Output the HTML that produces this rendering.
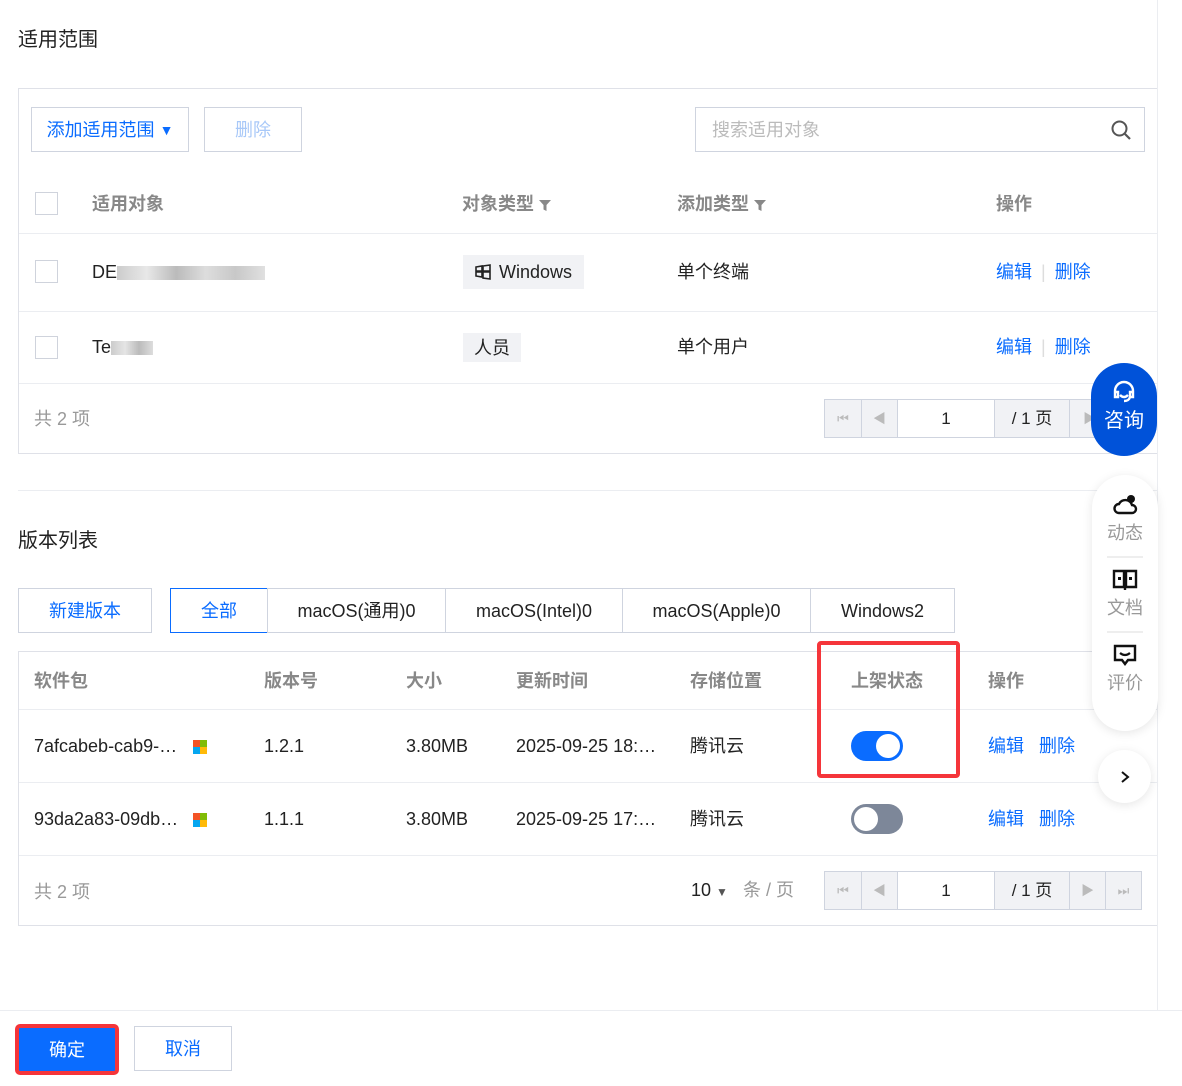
<!DOCTYPE html>
<html><head><meta charset="utf-8"><style>
*{box-sizing:border-box;margin:0;padding:0}
body{width:1182px;height:1086px;position:relative;background:#fff;font-family:"Liberation Sans","Noto Sans CJK SC",sans-serif;font-size:18px;line-height:22px;color:#222;overflow:hidden}
.a{position:absolute;white-space:nowrap}
.box{position:absolute;border:1px solid #dfe1e8}
.hl{position:absolute;height:1px;background:#ebedf1}
.cb{position:absolute;width:23px;height:23px;border:1px solid #cfd3dc;background:#fff}
.btn{position:absolute;border:1px solid #cfd4df;display:flex;align-items:center;justify-content:center;background:#fff}
.th{color:#888;font-weight:bold}
.blue{color:#0a6cff}
.gray{color:#999}
.tag{position:absolute;background:#f1f2f5;display:flex;align-items:center;justify-content:center}
.pg{position:absolute;height:39px;border:1px solid #cfd4df;display:flex}
.pg div{border-right:1px solid #cfd4df;background:#f1f2f5;display:flex;align-items:center;justify-content:center;color:#bbb;font-size:13px}
.ms{position:absolute;width:14px;height:14px}
.ms i{position:absolute;width:7px;height:7px}
.flt{display:inline-block;vertical-align:middle;margin-left:4px}
</style></head><body>
<div class="a" style="left:18px;top:29px;font-size:20px">适用范围</div>
<div class="box" style="left:18px;top:88px;width:1140px;height:366px"></div>
<div class="btn blue" style="left:31px;top:107px;width:158px;height:45px">添加适用范围&nbsp;<span style="font-size:14px">▼</span></div>
<div class="btn" style="left:204px;top:107px;width:98px;height:45px;color:#a8c8f8">删除</div>
<div class="btn" style="left:695px;top:107px;width:450px;height:45px;justify-content:flex-start;padding-left:16px;color:#bbb">搜索适用对象
<svg style="position:absolute;right:12px;top:11px" width="22" height="22" viewBox="0 0 22 22"><circle cx="9.5" cy="9.5" r="7" fill="none" stroke="#555" stroke-width="2"/><path d="M15 15l5 5" stroke="#555" stroke-width="2.2"/></svg></div>
<div class="cb" style="left:35px;top:192px"></div>
<div class="a th" style="left:92px;top:193px">适用对象</div>
<div class="a th" style="left:462px;top:193px">对象类型<svg class="flt" width="14" height="14" viewBox="0 0 14 14"><path d="M1 2h12L8.5 7v6l-3-1.5V7z" fill="#888"/></svg></div>
<div class="a th" style="left:677px;top:193px">添加类型<svg class="flt" width="14" height="14" viewBox="0 0 14 14"><path d="M1 2h12L8.5 7v6l-3-1.5V7z" fill="#888"/></svg></div>
<div class="a th" style="left:996px;top:193px">操作</div>
<div class="hl" style="left:19px;top:233px;width:1138px"></div>
<div class="cb" style="left:35px;top:260px"></div>
<div class="a" style="left:92px;top:261px">DE<span style="display:inline-block;width:148px;height:14px;background:linear-gradient(90deg,#ccc,#e8e8e8,#bbb,#ddd,#c8c8c8,#e0e0e0);vertical-align:middle"></span></div>
<div class="tag" style="left:463px;top:255px;width:121px;height:34px">
<svg width="16" height="16" viewBox="0 0 16 16" style="margin-right:8px"><path d="M1 3l6-1v5H1zM8 2l7-1v6H8zM1 8h6v5l-6-1zM8 8h7v7l-7-1z" fill="none" stroke="#222" stroke-width="1.6"/></svg>Windows</div>
<div class="a" style="left:677px;top:261px">单个终端</div>
<div class="a blue" style="left:996px;top:261px">编辑<span style="color:#ddd;margin:0 9px">|</span>删除</div>
<div class="hl" style="left:19px;top:311px;width:1138px"></div>
<div class="cb" style="left:35px;top:336px"></div>
<div class="a" style="left:92px;top:336px">Te<span style="display:inline-block;width:42px;height:14px;background:linear-gradient(90deg,#ccc,#e5e5e5,#bbb,#ddd);vertical-align:middle"></span></div>
<div class="tag" style="left:463px;top:333px;width:58px;height:29px">人员</div>
<div class="a" style="left:677px;top:336px">单个用户</div>
<div class="a blue" style="left:996px;top:336px">编辑<span style="color:#ddd;margin:0 9px">|</span>删除</div>
<div class="hl" style="left:19px;top:383px;width:1138px"></div>
<div class="a gray" style="left:34px;top:408px">共 2 项</div>
<div class="pg" style="left:824px;top:399px;width:300px"><div style="width:37px">⏮</div><div style="width:36px">◀</div><div style="width:97px;background:#fff;color:#222;font-size:17px">1</div><div style="width:75px;color:#222;font-size:17px">/ 1 页</div><div style="width:40px">▶</div></div>
<div class="hl" style="left:18px;top:490px;width:1140px"></div>
<div class="a" style="left:18px;top:530px;font-size:20px">版本列表</div>
<div class="btn blue" style="left:18px;top:588px;width:134px;height:45px">新建版本</div>
<div class="btn blue" style="left:170px;top:588px;width:98px;height:45px;border-color:#0a6cff">全部</div>
<div class="btn" style="left:267px;top:588px;width:179px;height:45px">macOS(通用)0</div>
<div class="btn" style="left:445px;top:588px;width:178px;height:45px">macOS(Intel)0</div>
<div class="btn" style="left:622px;top:588px;width:189px;height:45px">macOS(Apple)0</div>
<div class="btn" style="left:810px;top:588px;width:145px;height:45px">Windows2</div>
<div class="box" style="left:18px;top:651px;width:1140px;height:275px"></div>
<div class="a th" style="left:34px;top:670px">软件包</div>
<div class="a th" style="left:264px;top:670px">版本号</div>
<div class="a th" style="left:406px;top:670px">大小</div>
<div class="a th" style="left:516px;top:670px">更新时间</div>
<div class="a th" style="left:690px;top:670px">存储位置</div>
<div class="a th" style="left:851px;top:670px">上架状态</div>
<div class="a th" style="left:988px;top:670px">操作</div>
<div class="hl" style="left:19px;top:709px;width:1138px"></div>
<div class="a" style="left:34px;top:735px">7afcabeb-cab9-…</div>
<div class="ms" style="left:193px;top:740px"><i style="left:0;top:0;background:#f35325"></i><i style="left:7px;top:0;background:#81bc06"></i><i style="left:0;top:7px;background:#05a6f0"></i><i style="left:7px;top:7px;background:#ffba08"></i></div>
<div class="a" style="left:264px;top:735px">1.2.1</div>
<div class="a" style="left:406px;top:735px">3.80MB</div>
<div class="a" style="left:516px;top:735px">2025-09-25 18:…</div>
<div class="a" style="left:690px;top:735px">腾讯云</div>
<div class="a" style="left:851px;top:731px;width:52px;height:30px;border-radius:15px;background:#0a6cff"><div style="position:absolute;right:3px;top:3px;width:24px;height:24px;border-radius:50%;background:#fff"></div></div>
<div class="a blue" style="left:988px;top:735px">编辑&nbsp;&nbsp;&nbsp;删除</div>
<div class="hl" style="left:19px;top:782px;width:1138px"></div>
<div class="a" style="left:34px;top:808px">93da2a83-09db…</div>
<div class="ms" style="left:193px;top:813px"><i style="left:0;top:0;background:#f35325"></i><i style="left:7px;top:0;background:#81bc06"></i><i style="left:0;top:7px;background:#05a6f0"></i><i style="left:7px;top:7px;background:#ffba08"></i></div>
<div class="a" style="left:264px;top:808px">1.1.1</div>
<div class="a" style="left:406px;top:808px">3.80MB</div>
<div class="a" style="left:516px;top:808px">2025-09-25 17:…</div>
<div class="a" style="left:690px;top:808px">腾讯云</div>
<div class="a" style="left:851px;top:804px;width:52px;height:30px;border-radius:15px;background:#7d8799"><div style="position:absolute;left:3px;top:3px;width:24px;height:24px;border-radius:50%;background:#fff"></div></div>
<div class="a blue" style="left:988px;top:808px">编辑&nbsp;&nbsp;&nbsp;删除</div>
<div class="hl" style="left:19px;top:855px;width:1138px"></div>
<div class="a gray" style="left:34px;top:881px">共 2 项</div>
<div class="a" style="left:691px;top:879px">10 <span style="font-size:12px;color:#555">▼</span>&nbsp;&nbsp;&nbsp;<span class="gray">条 / 页</span></div>
<div class="pg" style="left:824px;top:871px;width:318px"><div style="width:37px">⏮</div><div style="width:36px">◀</div><div style="width:97px;background:#fff;color:#222;font-size:17px">1</div><div style="width:75px;color:#222;font-size:17px">/ 1 页</div><div style="width:36px">▶</div><div style="width:35px;border-right:none">⏭</div></div>
<div class="a" style="left:817px;top:641px;width:143px;height:137px;border:4px solid #f5353a;border-radius:4px"></div>
<div class="hl" style="left:0;top:1010px;width:1182px"></div>
<div class="a" style="left:15px;top:1024px;width:104px;height:51px;border:4px solid #f5353a;border-radius:5px;background:#0a6cff;color:#fff;display:flex;align-items:center;justify-content:center">确定</div>
<div class="btn blue" style="left:134px;top:1026px;width:98px;height:45px">取消</div>
<div class="a" style="left:1157px;top:0;width:1px;height:1010px;background:#ebedf1"></div>
<div class="a" style="left:1091px;top:363px;width:66px;height:93px;border-radius:33px;background:#0052d9;color:#fff;font-size:20px;text-align:center;padding-top:16px">
<svg width="26" height="26" viewBox="0 0 26 26"><path d="M4 15v-3a9 9 0 0118 0v3M4 13h3v5H4zM19 13h3v5h-3zM9 16q4 4 8 0M19 18q-1 4-6 4" fill="none" stroke="#fff" stroke-width="2.4"/></svg><div style="margin-top:0">咨询</div></div>
<div class="a" style="left:1092px;top:475px;width:66px;height:256px;border-radius:33px;background:#fff;box-shadow:0 2px 10px rgba(0,0,0,.1);text-align:center;color:#999;font-size:18px">
<svg style="margin-top:18px" width="26" height="24" viewBox="0 0 26 24"><path d="M7 20h13a4 4 0 000-8 7 7 0 00-13-1 4.5 4.5 0 000 9z" fill="none" stroke="#111" stroke-width="2.4"/><circle cx="19" cy="6" r="4" fill="#111"/></svg>
<div>动态</div><div style="width:36px;height:2px;background:#eee;margin:12px auto 10px"></div>
<svg width="26" height="24" viewBox="0 0 26 24"><path d="M2 3h10v16H2zM14 3h10v16H14zM13 19v3" fill="none" stroke="#111" stroke-width="2.4"/><rect x="6" y="9" width="3" height="3" fill="#111"/><rect x="17" y="9" width="3" height="3" fill="#111"/></svg>
<div>文档</div><div style="width:36px;height:2px;background:#eee;margin:12px auto 10px"></div>
<svg width="26" height="24" viewBox="0 0 26 24"><path d="M3 3h20v14h-7l-3 4-3-4H3z" fill="none" stroke="#111" stroke-width="2.4"/><path d="M8 10q5 4 10 0" fill="none" stroke="#111" stroke-width="2.2"/></svg>
<div>评价</div></div>
<div class="a" style="left:1098px;top:750px;width:53px;height:53px;border-radius:50%;background:#fff;box-shadow:0 2px 10px rgba(0,0,0,.1);display:flex;align-items:center;justify-content:center"><svg width="12" height="14" viewBox="0 0 12 14"><path d="M3 2l6 5-6 5" fill="none" stroke="#111" stroke-width="2"/></svg></div>
</body></html>
